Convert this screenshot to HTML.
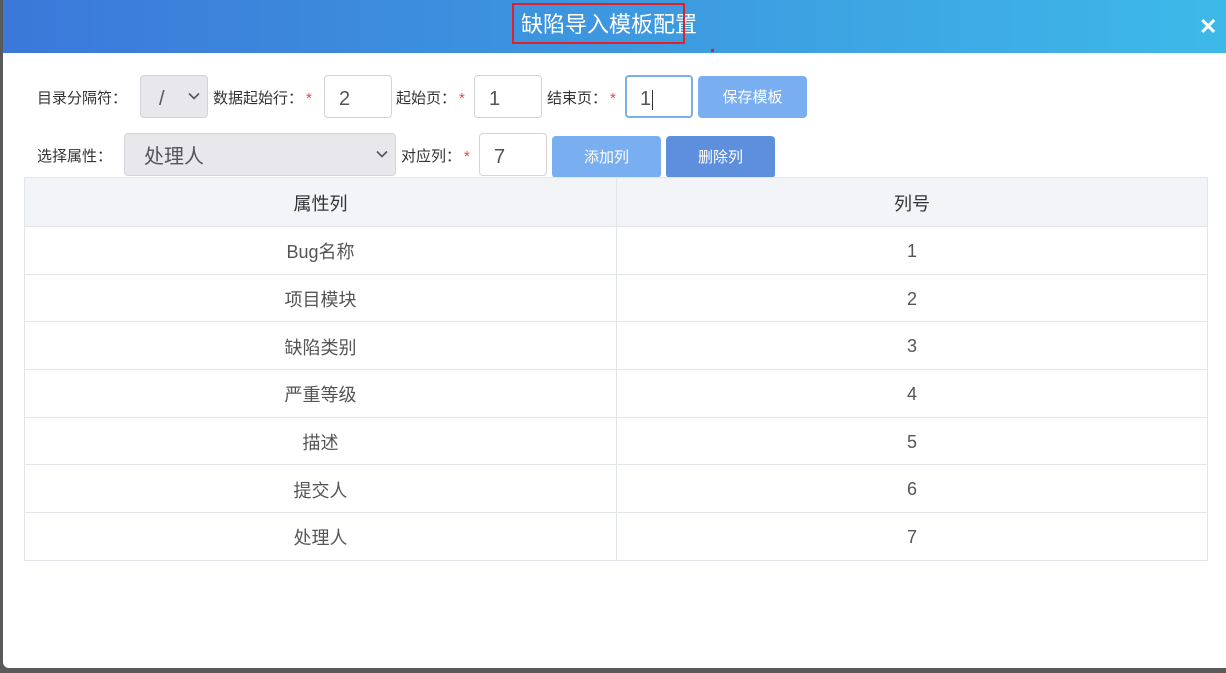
<!DOCTYPE html>
<html><head><meta charset="utf-8"><style>
*{box-sizing:border-box;margin:0;padding:0}
body{width:1226px;height:673px;overflow:hidden;background:#5a5a5a;font-family:"Liberation Sans","Noto Sans CJK SC",sans-serif;position:relative}
.modal{position:absolute;left:3px;top:0;width:1223px;height:668px;background:#fff;border-radius:0 0 0 6px;overflow:hidden}
.hd{position:absolute;left:0;top:0;width:1223px;height:53px;background:linear-gradient(90deg,#3b78d9,#3d9be0 55%,#3db9e9)}
.t{position:absolute;left:518px;top:11px;color:#fff;font-size:22px;line-height:28px}
.rb{position:absolute;left:509px;top:3px;width:173px;height:41px;border:2px solid #e0202a}
.x{position:absolute;left:1196px;top:16px;color:#fff;font-size:22px;font-weight:bold;line-height:22px}
.a{position:absolute;font-size:15px;color:#333;line-height:20px}
.st{color:#e44;margin-left:3px}
.in{position:absolute;height:43px;border:1px solid #d4d4d8;border-radius:4px;background:#fff;font-size:20px;color:#555;line-height:41px;padding-left:14px;padding-top:3px}
.sel{background:#e8e8ec}
.chev{position:absolute;top:16px}
.btn{position:absolute;height:42px;border-radius:4px;color:#fff;font-size:15px;line-height:44px;text-align:center}
table{position:absolute;left:21px;top:177px;width:1184px;border-collapse:collapse;font-size:18px;color:#555}
td,th{border:1px solid #e2e5ea;text-align:center;font-weight:normal;height:47.7px;padding-top:2px}
th{background:#f3f4f8;color:#333;height:49px}
</style></head><body>
<div class="modal">
<div class="hd"><div class="t">缺陷导入模板配置</div><div class="rb"></div><div class="x">✕</div></div>
<div style="position:absolute;left:708px;top:49px;width:3px;height:3px;background:#e02020"></div>
<div class="a" style="left:34px;top:89px">目录分隔符：</div>
<div class="in sel" style="left:137px;top:75px;width:68px;padding-left:18px">/<svg class="chev" style="left:47px" width="12" height="8" viewBox="0 0 12 8"><path d="M1 1.5 6 6.5 11 1.5" fill="none" stroke="#555" stroke-width="1.6"/></svg></div>
<div class="a" style="left:210px;top:89px">数据起始行：<span class="st">*</span></div>
<div class="in" style="left:321px;top:75px;width:68px">2</div>
<div class="a" style="left:393px;top:89px">起始页：<span class="st">*</span></div>
<div class="in" style="left:471px;top:75px;width:68px">1</div>
<div class="a" style="left:544px;top:89px">结束页：<span class="st">*</span></div>
<div class="in" style="left:622px;top:75px;width:68px;border:2px solid #7aaef0;padding-left:13px;padding-top:2px">1<span style="display:inline-block;width:1px;height:20px;background:#333;vertical-align:middle;margin-left:1px"></span></div>
<div class="btn" style="left:695px;top:76px;width:109px;background:#79aef0">保存模板</div>
<div class="a" style="left:34px;top:147px">选择属性：</div>
<div class="in sel" style="left:121px;top:133px;width:272px;padding-left:19px">处理人<svg class="chev" style="left:251px" width="12" height="8" viewBox="0 0 12 8"><path d="M1 1.5 6 6.5 11 1.5" fill="none" stroke="#555" stroke-width="1.6"/></svg></div>
<div class="a" style="left:398px;top:147px">对应列：<span class="st">*</span></div>
<div class="in" style="left:476px;top:133px;width:68px">7</div>
<div class="btn" style="left:549px;top:136px;width:109px;background:#79aef0">添加列</div>
<div class="btn" style="left:663px;top:136px;width:109px;background:#5d8fdc">删除列</div>
<table>
<tr><th style="width:592px">属性列</th><th>列号</th></tr>
<tr><td>Bug名称</td><td>1</td></tr>
<tr><td>项目模块</td><td>2</td></tr>
<tr><td>缺陷类别</td><td>3</td></tr>
<tr><td>严重等级</td><td>4</td></tr>
<tr><td>描述</td><td>5</td></tr>
<tr><td>提交人</td><td>6</td></tr>
<tr><td>处理人</td><td>7</td></tr>
</table>
</div>
</body></html>
